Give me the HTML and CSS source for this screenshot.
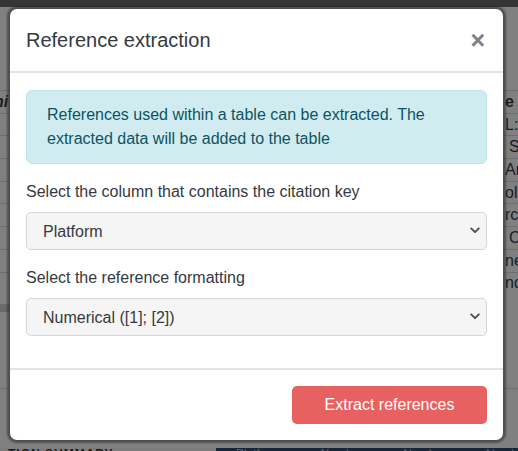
FILE: index.html
```html
<!DOCTYPE html>
<html>
<head>
<meta charset="utf-8">
<link rel="stylesheet" href="styles.css">
</head>
<body>
<div class="page">
  <div class="topbar"></div>
  <div class="bg-table">
    <div class="bg-row bg-head"><span class="l-cell it">hi</span><span class="r-cell b">e</span></div>
    <div class="bg-row"><span class="l-cell"></span><span class="r-cell">L: .</span></div>
    <div class="bg-row"><span class="l-cell"></span><span class="r-cell pad">S</span></div>
    <div class="bg-row"><span class="l-cell"></span><span class="r-cell">An</span></div>
    <div class="bg-row"><span class="l-cell"></span><span class="r-cell">olo</span></div>
    <div class="bg-row"><span class="l-cell"></span><span class="r-cell">rco</span></div>
    <div class="bg-row"><span class="l-cell"></span><span class="r-cell pad">C</span></div>
    <div class="bg-row"><span class="l-cell"></span><span class="r-cell">ne</span></div>
    <div class="bg-row"><span class="l-cell"></span><span class="r-cell">nd</span></div>
    <div class="bg-band"></div>
    <div class="bg-line"></div>
  </div>
  <div class="bottombar">
    <div class="bottom-left">TION SUMMARY</div>
    <div class="bottom-right"><span>Platform</span><span>Number</span><span>Number</span><span>Numb</span></div>
  </div>
</div>

<div class="modal">
  <div class="modal-header">
    <h5 class="modal-title">Reference extraction</h5>
    <button class="close" type="button">×</button>
  </div>
  <div class="modal-body">
    <div class="alert">References used within a table can be extracted. The extracted data will be added to the table</div>
    <div class="form-group">
      <label class="form-label">Select the column that contains the citation key</label>
      <div class="select-wrap">
        <select class="form-select"><option>Platform</option></select>
        <svg class="chev" width="10" height="7" viewBox="0 0 10 7"><path d="M1.2 1.4 L5 5.2 L8.8 1.4" fill="none" stroke="#4a4f55" stroke-width="1.9" stroke-linecap="round" stroke-linejoin="round"/></svg>
      </div>
    </div>
    <div class="form-group">
      <label class="form-label">Select the reference formatting</label>
      <div class="select-wrap">
        <select class="form-select"><option>Numerical ([1]; [2])</option></select>
        <svg class="chev" width="10" height="7" viewBox="0 0 10 7"><path d="M1.2 1.4 L5 5.2 L8.8 1.4" fill="none" stroke="#4a4f55" stroke-width="1.9" stroke-linecap="round" stroke-linejoin="round"/></svg>
      </div>
    </div>
  </div>
  <div class="modal-footer">
    <button class="btn-extract" type="button">Extract references</button>
  </div>
</div>
</body>
</html>
```
FILE: styles.css
```css
html, body {
  margin: 0;
  padding: 0;
}
body {
  width: 518px;
  height: 451px;
  overflow: hidden;
  position: relative;
  background: #808080;
  font-family: "Liberation Sans", Arial, sans-serif;
}
.page {
  display: flex;
  flex-direction: column;
  height: 451px;
}
.topbar {
  height: 7px;
  background: #353535;
}
.bg-table {
  margin-top: 83px;
  display: flex;
  flex-direction: column;
  flex: 1;
}
.bg-row {
  height: 22.7px;
  border-top: 1px solid #6e6e6e;
  box-sizing: border-box;
  display: flex;
  justify-content: space-between;
  align-items: center;
  font-size: 16px;
  color: #1c1c1c;
}
.l-cell {
  font-style: italic;
  font-weight: bold;
  margin-left: -6px;
}
.r-cell {
  width: 13px;
  white-space: nowrap;
  overflow: hidden;
}
.r-cell.pad { padding-left: 4px; width: 9px; }
.r-cell.b { font-weight: bold; }
.bg-band {
  height: 7px;
  width: 10px;
  margin-top: 10px;
  background: #6a6a6a;
  border-top: 1px solid #6e6e6e;
}
.bg-line {
  margin-top: 76px;
  height: 1px;
  background: #6e6e6e;
}
.bottombar {
  height: 3px;
  display: flex;
  overflow: hidden;
  font-size: 12px;
  line-height: 12px;
}
.bottom-left {
  width: 256px;
  background: #7c7c7c;
  color: #1a1a1a;
  padding-left: 8px;
  font-weight: bold;
  letter-spacing: 1px;
  box-sizing: border-box;
}
.bottom-right {
  flex: 1;
  background: #17253a;
  color: #50607a;
  display: flex;
  gap: 40px;
  padding-left: 20px;
}

/* modal */
.modal {
  position: absolute;
  top: 9px;
  left: 10px;
  width: 493px;
  background: #fff;
  border-radius: 7px;
  box-shadow: 0 0 2px 3px rgba(40, 40, 40, 0.55);
  color: #212529;
}
.modal-header {
  display: flex;
  align-items: center;
  justify-content: space-between;
  padding: 16px;
  border-bottom: 2px solid #e1e4e8;
}
.modal-title {
  margin: 0;
  font-size: 20px;
  font-weight: normal;
  line-height: 30px;
  color: #343a40;
}
.close {
  border: 0;
  background: transparent;
  padding: 0;
  margin: 0 2px 0 0;
  font-family: "Liberation Sans", Arial, sans-serif;
  font-size: 25px;
  font-weight: bold;
  line-height: 26px;
  color: #808080;
}
.modal-body {
  padding: 17px 16px 16px;
}
.alert {
  background: #d1ecf1;
  border: 1px solid #bee5eb;
  border-radius: 6px;
  color: #0c5460;
  font-size: 16px;
  line-height: 24px;
  padding: 12px 20px;
  margin-bottom: 16px;
}
.form-group {
  margin-bottom: 16px;
}
.form-label {
  display: block;
  font-size: 16px;
  line-height: 24px;
  margin-bottom: 8px;
  color: #343a40;
}
.select-wrap {
  position: relative;
}
.form-select {
  display: block;
  width: 100%;
  height: 38px;
  box-sizing: border-box;
  appearance: none;
  -webkit-appearance: none;
  background: #f5f5f5;
  border: 1px solid #d3d6da;
  border-radius: 5px;
  padding: 0 16px;
  font-family: "Liberation Sans", Arial, sans-serif;
  font-size: 16px;
  color: #343a40;
}
.chev {
  position: absolute;
  right: 7px;
  top: 15px;
}
.modal-footer {
  display: flex;
  justify-content: flex-end;
  padding: 16px;
  border-top: 2px solid #e1e4e8;
}
.btn-extract {
  width: 195px;
  height: 38px;
  border: 0;
  border-radius: 5px;
  background: #e86161;
  color: #fff;
  font-family: "Liberation Sans", Arial, sans-serif;
  font-size: 16px;
}
```
